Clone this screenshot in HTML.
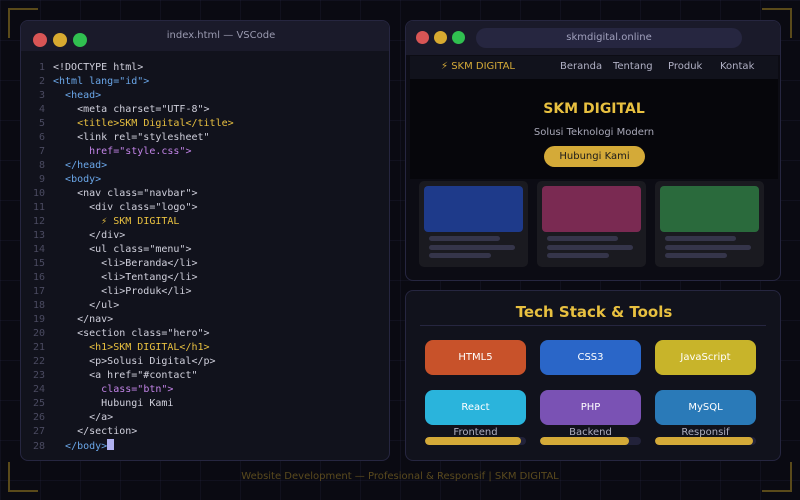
<!DOCTYPE html>
<html><head><style>
*{margin:0;padding:0;box-sizing:border-box}
body{width:800px;height:500px;overflow:hidden;background:#0a0a12;font-family:"DejaVu Sans","Liberation Sans",sans-serif;position:relative;
background-image:linear-gradient(rgba(40,40,70,.25) 1px,transparent 1px),linear-gradient(90deg,rgba(40,40,70,.25) 1px,transparent 1px);background-size:40px 40px}
.abs{position:absolute}
.corner{position:absolute;width:30px;height:30px;border-color:#5a4a1a;border-style:solid;border-width:0}
.panel{position:absolute;background:#11121c;border:1px solid #262640;border-radius:8px;overflow:hidden}
.dot{position:absolute;border-radius:50%}
.code{position:absolute;left:0;top:40px;font-family:"DejaVu Sans Mono","Liberation Mono",monospace;font-size:10px;line-height:14px;color:#d0d0dc;white-space:pre}
.ln{display:inline-block;width:24px;text-align:right;color:#4a4a60;margin-right:8px}
.t{color:#6aa6e8}.g{color:#e8c040}.p{color:#c384e8}
.btn{position:absolute;width:101px;height:35px;border-radius:8px;color:#fff;font-size:10px;text-align:center;line-height:36px}
.bar{position:absolute;height:8px;width:101px;border-radius:4px;background:#22223a;overflow:hidden}
.bar i{display:block;height:100%;background:#d4aa38;border-radius:4px}
.lab{position:absolute;width:101px;text-align:center;color:#b0b0c0;font-size:10px}
.card{position:absolute;top:160px;width:109px;height:86px;background:#1a1a20;border-radius:5px}
.card .c{position:absolute;left:5px;top:5px;width:99px;height:46px;border-radius:4px}
.card .l{position:absolute;height:5px;border-radius:3px;background:#35354a;left:10px}
</style></head><body>
<div class="corner" style="left:8px;top:8px;border-top-width:2px;border-left-width:2px"></div>
<div class="corner" style="right:8px;top:8px;border-top-width:2px;border-right-width:2px"></div>
<div class="corner" style="left:8px;bottom:8px;border-bottom-width:2px;border-left-width:2px"></div>
<div class="corner" style="right:8px;bottom:8px;border-bottom-width:2px;border-right-width:2px"></div>

<div class="panel" style="left:20px;top:20px;width:370px;height:441px">
<div class="abs" style="left:0;top:0;width:370px;height:30px;background:#1a1a2a"></div>
<div class="dot" style="left:12px;top:12px;width:14px;height:14px;background:#d85555"></div>
<div class="dot" style="left:32px;top:12px;width:14px;height:14px;background:#d8aa30"></div>
<div class="dot" style="left:52px;top:12px;width:14px;height:14px;background:#30c050"></div>
<div class="abs" style="left:0;top:9px;width:400px;text-align:center;color:#9a9ab0;font-size:10px">index.html — VSCode</div>
<div class="code"><span class="ln">1</span>&lt;!DOCTYPE html&gt;
<span class="ln">2</span><span class="t">&lt;html lang="id"&gt;</span>
<span class="ln">3</span>  <span class="t">&lt;head&gt;</span>
<span class="ln">4</span>    &lt;meta charset="UTF-8"&gt;
<span class="ln">5</span>    <span class="g">&lt;title&gt;SKM Digital&lt;/title&gt;</span>
<span class="ln">6</span>    &lt;link rel="stylesheet"
<span class="ln">7</span>      <span class="p">href="style.css"&gt;</span>
<span class="ln">8</span>  <span class="t">&lt;/head&gt;</span>
<span class="ln">9</span>  <span class="t">&lt;body&gt;</span>
<span class="ln">10</span>    &lt;nav class="navbar"&gt;
<span class="ln">11</span>      &lt;div class="logo"&gt;
<span class="ln">12</span>        <span class="g">⚡ SKM DIGITAL</span>
<span class="ln">13</span>      &lt;/div&gt;
<span class="ln">14</span>      &lt;ul class="menu"&gt;
<span class="ln">15</span>        &lt;li&gt;Beranda&lt;/li&gt;
<span class="ln">16</span>        &lt;li&gt;Tentang&lt;/li&gt;
<span class="ln">17</span>        &lt;li&gt;Produk&lt;/li&gt;
<span class="ln">18</span>      &lt;/ul&gt;
<span class="ln">19</span>    &lt;/nav&gt;
<span class="ln">20</span>    &lt;section class="hero"&gt;
<span class="ln">21</span>      <span class="g">&lt;h1&gt;SKM DIGITAL&lt;/h1&gt;</span>
<span class="ln">22</span>      &lt;p&gt;Solusi Digital&lt;/p&gt;
<span class="ln">23</span>      &lt;a href="#contact"
<span class="ln">24</span>        <span class="p">class="btn"&gt;</span>
<span class="ln">25</span>        Hubungi Kami
<span class="ln">26</span>      &lt;/a&gt;
<span class="ln">27</span>    &lt;/section&gt;
<span class="ln">28</span>  <span class="t">&lt;/body&gt;</span><span style="background:#b0b0f0;display:inline-block;width:7px;height:11px;vertical-align:-1px;line-height:0"></span></div>
</div>

<div class="panel" style="left:405px;top:20px;width:376px;height:261px;background:#0c0c14">
<div class="abs" style="left:0;top:0;width:376px;height:34px;background:#1a1a2a"></div>
<div class="dot" style="left:10px;top:10px;width:13px;height:13px;background:#d85555"></div>
<div class="dot" style="left:28px;top:10px;width:13px;height:13px;background:#d8aa30"></div>
<div class="dot" style="left:46px;top:10px;width:13px;height:13px;background:#30c050"></div>
<div class="abs" style="left:70px;top:7px;width:266px;height:20px;border-radius:10px;background:#262640;color:#a0a0bc;font-size:10px;text-align:center;line-height:20px">skmdigital.online</div>
<div class="abs" style="left:4px;top:35px;width:368px;height:23px;background:#11121c"></div>
<div class="abs" style="left:35px;top:40px;color:#d4aa38;font-size:10px">⚡ SKM DIGITAL</div>
<div class="abs" style="left:154px;top:40px;color:#b0b0c4;font-size:10px">Beranda</div>
<div class="abs" style="left:207px;top:40px;color:#b0b0c4;font-size:10px">Tentang</div>
<div class="abs" style="left:262px;top:40px;color:#b0b0c4;font-size:10px">Produk</div>
<div class="abs" style="left:314px;top:40px;color:#b0b0c4;font-size:10px">Kontak</div>
<div class="abs" style="left:4px;top:58px;width:368px;height:100px;background:#06060b"></div>
<div class="abs" style="left:0;top:80px;width:376px;text-align:center;color:#e8c040;font-size:14px;font-weight:bold">SKM DIGITAL</div>
<div class="abs" style="left:0;top:106px;width:376px;text-align:center;color:#a8a8b8;font-size:10px">Solusi Teknologi Modern</div>
<div class="abs" style="left:138px;top:125px;width:101px;height:21px;border-radius:11px;background:#d4aa38;color:#1a1a1a;font-size:10px;text-align:center;line-height:21px">Hubungi Kami</div>
<div class="card" style="left:13px"><div class="c" style="background:#1e3a8a"></div><div class="l" style="top:55px;width:71px"></div><div class="l" style="top:64px;width:86px"></div><div class="l" style="top:72px;width:62px"></div></div>
<div class="card" style="left:131px"><div class="c" style="background:#7a2a52"></div><div class="l" style="top:55px;width:71px"></div><div class="l" style="top:64px;width:86px"></div><div class="l" style="top:72px;width:62px"></div></div>
<div class="card" style="left:249px"><div class="c" style="background:#2a6a3c"></div><div class="l" style="top:55px;width:71px"></div><div class="l" style="top:64px;width:86px"></div><div class="l" style="top:72px;width:62px"></div></div>
</div>

<div class="panel" style="left:405px;top:290px;width:376px;height:171px">
<div class="abs" style="left:0;top:12px;width:376px;text-align:center;color:#e8c040;font-size:15px;font-weight:bold">Tech Stack &amp; Tools</div>
<div class="abs" style="left:14px;top:34px;width:346px;height:1px;background:#262640"></div>
</div>
<div class="btn" style="left:425px;top:340px;background:#c8522a">HTML5</div>
<div class="btn" style="left:540px;top:340px;background:#2a66c8">CSS3</div>
<div class="btn" style="left:655px;top:340px;background:#c8b42a">JavaScript</div>
<div class="btn" style="left:425px;top:390px;background:#2ab4dc">React</div>
<div class="btn" style="left:540px;top:390px;background:#7a52b4">PHP</div>
<div class="btn" style="left:655px;top:390px;background:#2a7ab8">MySQL</div>
<div class="lab" style="left:425px;top:427px">Frontend</div>
<div class="lab" style="left:540px;top:427px">Backend</div>
<div class="lab" style="left:655px;top:427px">Responsif</div>
<div class="bar" style="left:425px;top:437px"><i style="width:96px"></i></div>
<div class="bar" style="left:540px;top:437px"><i style="width:89px"></i></div>
<div class="bar" style="left:655px;top:437px"><i style="width:98px"></i></div>

<div class="abs" style="left:0;top:471px;width:800px;text-align:center;color:#5a4a1e;font-size:10px">Website Development — Profesional &amp; Responsif | SKM DIGITAL</div>
</body></html>
